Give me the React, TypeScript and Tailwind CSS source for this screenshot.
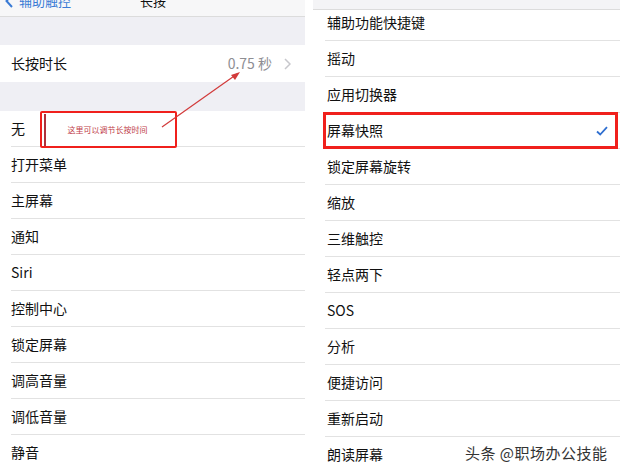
import React from 'react';

const leftItems = ['无', '打开菜单', '主屏幕', '通知', 'Siri', '控制中心', '锁定屏幕', '调高音量', '调低音量', '静音'];
const rightItems = [
    '摇动', '应用切换器', '屏幕快照', '锁定屏幕旋转', '缩放', '三维触控',
    '轻点两下', 'SOS', '分析', '便捷访问', '重新启动', '朗读屏幕',
];

const font = { fontFamily: '"Noto Sans CJK SC", "Liberation Sans", sans-serif' };

export default function App() {
    return (
        <div className="relative w-[624px] h-[471px] overflow-hidden bg-white flex gap-[8px]" style={font}>
            {/* Left screen */}
            <div className="relative w-[305px] shrink-0 flex flex-col">
                <div className="h-[17px] shrink-0 overflow-hidden bg-[#f7f7f8] border-b border-[#dcdcdc] relative">
                    <div className="flex items-center -mt-[9px] h-[20px] pl-[5px]">
                        <svg width="8" height="14" viewBox="0 0 8 14" className="mr-[6px]">
                            <path d="M7 1 L1.5 7 L7 13" fill="none" stroke="#3a7bd5" strokeWidth="2" />
                        </svg>
                        <span className="text-[13px] text-[#3a7bd5]">辅助触控</span>
                        <span className="absolute left-[140px] top-[-9px] text-[13px] text-[#111]">长按</span>
                    </div>
                </div>
                <div className="h-[28px] shrink-0 bg-[#efeff4]" />
                <div className="h-[37px] shrink-0 flex items-center justify-between pl-[11px] pr-[14px] bg-white">
                    <span className="text-[14px] text-[#111]">长按时长</span>
                    <div className="flex items-center gap-[12px]">
                        <span className="text-[14px] text-[#8e8e93]">0.75 秒</span>
                        <svg width="7" height="12" viewBox="0 0 7 12">
                            <path d="M1 1 L6 6 L1 11" fill="none" stroke="#c7c7cc" strokeWidth="1.5" />
                        </svg>
                    </div>
                </div>
                <div className="h-[29px] shrink-0 bg-[#efeff4]" />
                {leftItems.map((item, i) => (
                    <div key={item} className="flex flex-col shrink-0">
                        <div className="h-[35px] flex items-center pl-[11px] bg-white">
                            <span className="text-[14px] text-[#111]">{item}</span>
                        </div>
                        {i < leftItems.length - 1 && <div className="ml-[11px] h-px bg-[#e2e2e2]" />}
                    </div>
                ))}

                {/* annotation */}
                <div className="absolute left-[40px] top-[111px] w-[137px] h-[37px] border-[2.5px] border-[#f0201c] rounded-[2px] flex items-center">
                    <div className="ml-[2px] w-[1.5px] h-[32px] bg-[#b0303a]" />
                    <span className="ml-[22px] text-[8px] text-[#c0404a]">这里可以调节长按时间</span>
                </div>
                <svg className="absolute left-0 top-0 pointer-events-none" width="305" height="160">
                    <line x1="162" y1="127" x2="237" y2="74" stroke="#d23a3a" strokeWidth="1.2" />
                    <path d="M240 72 L231 75 L235 80 Z" fill="#d23a3a" />
                </svg>
            </div>

            {/* Right screen */}
            <div className="relative w-[307px] shrink-0 flex flex-col">
                <div className="h-[10px] shrink-0 bg-[#f4f4f6] border-b border-[#dcdcdc]" />
                <div className="h-[30px] shrink-0 flex items-center pl-[14px] pb-[6px] bg-white">
                    <span className="text-[14px] text-[#111]">辅助功能快捷键</span>
                </div>
                <div className="ml-[12px] h-px shrink-0 bg-[#e2e2e2]" />
                {rightItems.map((item, i) => (
                    <div key={item} className="flex flex-col shrink-0">
                        <div className="h-[35px] flex items-center justify-between pl-[14px] pr-[14px] bg-white">
                            <span className="text-[14px] text-[#111]">{item}</span>
                            {item === '屏幕快照' && (
                                <svg width="12" height="10" viewBox="0 0 12 10" className="mr-[-2px]">
                                    <path d="M1 5.5 L4.2 8.5 L11 1.2" fill="none" stroke="#2f6fd0" strokeWidth="1.8" />
                                </svg>
                            )}
                        </div>
                        {i < rightItems.length - 1 && <div className="ml-[12px] h-px bg-[#e2e2e2]" />}
                    </div>
                ))}
                <div className="absolute left-[10px] top-[112px] w-[295px] h-[37px] border-[3px] border-[#f0201c]" />
            </div>

            <div
                className="absolute left-[465px] top-[442px] text-[15px] text-[#333] tracking-[0.5px]"
                style={{ textShadow: '0 0 2px #fff, 0 0 2px #fff' }}
            >
                头条 @职场办公技能
            </div>
        </div>
    );
}
